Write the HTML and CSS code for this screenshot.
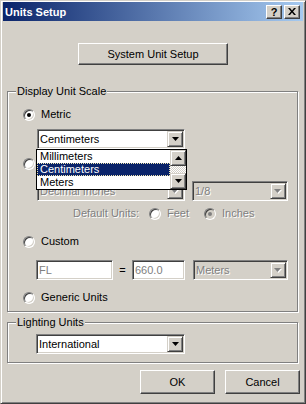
FILE: index.html
```html
<!DOCTYPE html>
<html lang="en">
<head>
    <meta charset="UTF-8">
    <title>Units Setup</title>
    <link rel="stylesheet" href="styles.css">
</head>
<body>
    <div class="window">
        <div class="titlebar">
            <span class="title">Units Setup</span>
            <div class="title-buttons">
                <span class="tbtn help">?</span>
                <span class="tbtn close">
                    <svg width="8" height="7" viewBox="0 0 8 7"><path d="M0 0h2l2 2.5L6 0h2L5 3.5 8 7H6L4 4.5 2 7H0l3-3.5z" fill="#000"/></svg>
                </span>
            </div>
        </div>

        <div class="top-row">
            <div class="btn wide">System Unit Setup</div>
        </div>

        <fieldset class="group scale">
            <legend>Display Unit Scale</legend>
            <div class="group-body">
                <div class="radio-row r-metric"><span class="radio checked"></span>Metric</div>

                <div class="field-row r-metric-combo">
                    <div class="combo-wrap">
                        <div class="combo w148">
                            <span class="combo-text">Centimeters</span>
                            <span class="combo-btn"><svg width="7" height="4"><polygon points="0,0 7,0 3.5,4" fill="#000"/></svg></span>
                        </div>
                        <!-- open list of the metric combo -->
                        <div class="dropdown">
                            <div class="list">
                                <div class="item">Millimeters</div>
                                <div class="item selected">Centimeters</div>
                                <div class="item">Meters</div>
                            </div>
                            <div class="scrollbar">
                                <span class="sbtn"><svg width="7" height="4"><polygon points="3.5,0 7,4 0,4" fill="#000"/></svg></span>
                                <span class="track"></span>
                                <span class="sbtn"><svg width="7" height="4"><polygon points="0,0 7,0 3.5,4" fill="#000"/></svg></span>
                            </div>
                        </div>
                    </div>
                </div>

                <!-- US standard radio, its label sits under the open list -->
                <div class="radio-row r-us"><span class="radio"></span></div>

                <div class="field-row r-decimal">
                    <div class="combo w148 disabled">
                        <span class="combo-text">Decimal Inches</span>
                        <span class="combo-btn"><svg width="8" height="5"><polygon points="1,1 8,1 4.5,5" fill="#fff"/><polygon points="0,0 7,0 3.5,4" fill="#808080"/></svg></span>
                    </div>
                    <div class="combo w96 disabled gap-left">
                        <span class="combo-text">1/8</span>
                        <span class="combo-btn"><svg width="8" height="5"><polygon points="1,1 8,1 4.5,5" fill="#fff"/><polygon points="0,0 7,0 3.5,4" fill="#808080"/></svg></span>
                    </div>
                </div>

                <div class="radio-row r-default dim">
                    <span class="default-label">Default Units:</span>
                    <span class="radio feet"></span><span class="feet-text">Feet</span>
                    <span class="radio checked off inches"></span>Inches
                </div>

                <div class="radio-row r-custom"><span class="radio"></span>Custom</div>

                <div class="field-row r-fl">
                    <div class="textbox w77 dim">FL</div>
                    <span class="equals">=</span>
                    <div class="textbox w53 dim">660.0</div>
                    <div class="combo w95 disabled gap-left">
                        <span class="combo-text">Meters</span>
                        <span class="combo-btn"><svg width="8" height="5"><polygon points="1,1 8,1 4.5,5" fill="#fff"/><polygon points="0,0 7,0 3.5,4" fill="#808080"/></svg></span>
                    </div>
                </div>

                <div class="radio-row r-generic"><span class="radio"></span>Generic Units</div>
            </div>
        </fieldset>

        <fieldset class="group lighting">
            <legend>Lighting Units</legend>
            <div class="group-body">
                <div class="field-row r-light">
                    <div class="combo w149">
                        <span class="combo-text">International</span>
                        <span class="combo-btn"><svg width="7" height="4"><polygon points="0,0 7,0 3.5,4" fill="#000"/></svg></span>
                    </div>
                </div>
            </div>
        </fieldset>

        <div class="bottom-row">
            <div class="btn small">OK</div>
            <div class="btn small">Cancel</div>
        </div>
    </div>
</body>
</html>
```

FILE: styles.css
```css
body {
    margin: 0;
    font-family: "Liberation Sans", Arial, sans-serif;
    font-size: 11px;
    color: #000;
    background: #d4d0c8;
}
.window {
    width: 306px;
    height: 404px;
    box-sizing: border-box;
    background: #d4d0c8;
    border: 1px solid;
    border-color: #d4d0c8 #404040 #404040 #d4d0c8;
    box-shadow: inset 1px 1px #fff, inset -1px -1px #808080;
    padding: 1px 2px 2px 2px;
    display: flex;
    flex-direction: column;
}

/* title bar */
.titlebar {
    height: 19px;
    flex: none;
    background: linear-gradient(to right, #0a246a, #a6caf0);
    display: flex;
    align-items: center;
    justify-content: space-between;
    padding: 0 3px 0 2px;
    color: #fff;
    font-weight: bold;
}
.title-buttons {
    display: flex;
}
.tbtn {
    width: 16px;
    height: 14px;
    box-sizing: border-box;
    background: #d4d0c8;
    border: 1px solid;
    border-color: #fff #404040 #404040 #fff;
    box-shadow: inset -1px -1px #808080;
    display: flex;
    align-items: center;
    justify-content: center;
    color: #000;
    font-weight: bold;
    line-height: 12px;
}
.help {
    margin-right: 2px;
}

/* push buttons */
.btn {
    box-sizing: border-box;
    height: 24px;
    border: 1px solid;
    border-color: #fff #404040 #404040 #fff;
    box-shadow: inset -1px -1px #808080;
    display: flex;
    align-items: center;
    justify-content: center;
}
.top-row {
    display: flex;
    justify-content: center;
    margin-top: 22px;
}
.btn.wide {
    width: 150px;
    height: 22px;
}
.bottom-row {
    display: flex;
    justify-content: flex-end;
    gap: 10px;
    margin-top: 7px;
    padding-right: 3px;
}
.btn.small {
    width: 75px;
}

/* group boxes */
.group {
    margin: 20px 5px 0 4px;
    padding: 0 0 7px 0;
    border: 1px solid #808080;
    box-shadow: inset 1px 1px #fff, 1px 1px #fff;
    min-width: 0;
}
.group legend {
    margin-left: 8px;
    padding: 0 1px;
    line-height: 13px;
    background: #d4d0c8;
}
.group.lighting {
    margin-top: 4px;
    padding-bottom: 8px;
}
.group-body {
    display: flex;
    flex-direction: column;
    padding-left: 15px;
}

/* rows */
.radio-row {
    display: flex;
    align-items: center;
    height: 13px;
    line-height: 13px;
}
.field-row {
    display: flex;
    align-items: center;
    height: 20px;
    margin-left: 14px;
}
.r-metric { margin-top: 10px; }
.r-metric-combo { margin-top: 8px; }
.r-us { margin-top: 8px; }
.r-decimal { margin-top: 11px; }
.r-default { margin-top: 6px; }
.r-custom { margin-top: 15px; }
.r-fl { margin-top: 12px; margin-left: 13px; }
.r-generic { margin-top: 11px; }
.r-light { margin-top: 5px; margin-left: 13px; }

.dim {
    color: #808080;
    text-shadow: 1px 1px #fff;
}
.default-label {
    margin-left: 50px;
    margin-right: 10px;
}
.feet-text {
    margin-right: 15px;
}

/* radio buttons */
.radio {
    width: 12px;
    height: 12px;
    box-sizing: border-box;
    border-radius: 50%;
    background: #fff;
    border: 1px solid;
    border-color: #808080 #fff #fff #808080;
    box-shadow: inset 1px 1px #404040, inset -1px -1px #d4d0c8;
    display: flex;
    align-items: center;
    justify-content: center;
    margin-right: 5px;
    flex: none;
}
.radio.checked::after {
    content: "";
    width: 4px;
    height: 4px;
    border-radius: 50%;
    background: #000;
}
.radio.off {
    background: #d4d0c8;
}
.radio.off::after {
    background: #808080;
}
.radio-row .radio {
    margin-right: 6px;
}

/* sunken fields and combos */
.combo, .textbox {
    height: 20px;
    box-sizing: border-box;
    background: #fff;
    border: 1px solid;
    border-color: #808080 #fff #fff #808080;
    box-shadow: inset 1px 1px #404040, inset -1px -1px #d4d0c8;
    padding: 1px;
    display: flex;
    align-items: center;
    flex: none;
}
.combo-text, .textbox {
    line-height: 13px;
}
.combo-text {
    flex: 1;
    padding-left: 1px;
    white-space: nowrap;
    overflow: hidden;
}
.textbox {
    padding-left: 2px;
}
.combo-btn {
    width: 16px;
    height: 16px;
    box-sizing: border-box;
    background: #d4d0c8;
    border: 1px solid;
    border-color: #d4d0c8 #404040 #404040 #d4d0c8;
    box-shadow: inset 1px 1px #fff, inset -1px -1px #808080;
    display: flex;
    align-items: center;
    justify-content: center;
}
.combo.disabled {
    background: #d4d0c8;
}
.combo.disabled .combo-text {
    color: #808080;
    text-shadow: 1px 1px #fff;
}
.w148 { width: 148px; }
.w149 { width: 149px; }
.w96 { width: 96px; }
.w95 { width: 95px; }
.w77 { width: 77px; }
.w53 { width: 53px; }
.gap-left { margin-left: 7px; }
.r-fl .gap-left { margin-left: 8px; }
.equals {
    width: 19px;
    text-align: center;
}

/* open dropdown list */
.combo-wrap {
    position: relative;
}
.dropdown {
    position: absolute;
    left: -1px;
    top: 20px;
    width: 151px;
    height: 41px;
    box-sizing: border-box;
    border: 1px solid #000;
    background: #fff;
    display: flex;
    z-index: 2;
}
.list {
    flex: 1;
    display: flex;
    flex-direction: column;
}
.item {
    height: 13px;
    line-height: 13px;
    padding-left: 3px;
}
.item.selected {
    background: #0a246a;
    color: #fff;
    outline: 1px dotted #f0e6b0;
    outline-offset: -1px;
}
.scrollbar {
    width: 16px;
    display: flex;
    flex-direction: column;
}
.sbtn {
    height: 16px;
    box-sizing: border-box;
    background: #d4d0c8;
    border: 1px solid;
    border-color: #d4d0c8 #404040 #404040 #d4d0c8;
    box-shadow: inset 1px 1px #fff, inset -1px -1px #808080;
    display: flex;
    align-items: center;
    justify-content: center;
}
.track {
    flex: 1;
    background-image: repeating-conic-gradient(#fff 0 25%, #d4d0c8 0 50%);
    background-size: 2px 2px;
}
```
